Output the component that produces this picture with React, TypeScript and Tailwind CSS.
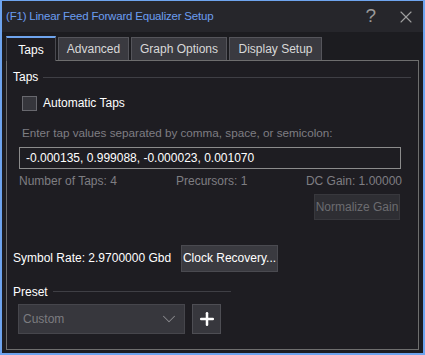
import React from 'react';
import { ChevronDown, Plus, X } from 'lucide-react';

const tabs = [
  { label: 'Taps', w: 'w-[50px]' },
  { label: 'Advanced', w: 'w-[71px]' },
  { label: 'Graph Options', w: 'w-[96px]' },
  { label: 'Display Setup', w: 'w-[93px]' },
];

const App: React.FC = () => {
  return (
    <div
      className="w-[425px] h-[355px] bg-[#1c1c20] border-2 border-t border-[#6ea4ee] flex flex-col text-[12px] text-[#e6e6e6]"
      style={{ fontFamily: '"Liberation Sans", Arial, sans-serif' }}
    >
      {/* title bar */}
      <div className="h-[31px] bg-[#26262b] flex items-center pl-[4px] pr-[7px] shrink-0">
        <span className="text-[#6b9df0] text-[11.5px] tracking-[-0.2px]">(F1) Linear Feed Forward Equalizer Setup</span>
        <span className="ml-auto text-[#9a9a9a] text-[19px] font-light mr-[20px]">?</span>
        <X size={20} strokeWidth={1.3} className="text-[#a0a0a0]" />
      </div>

      {/* tabs */}
      <div className="flex items-end gap-[2px] pl-[4px] pt-[4px] h-[28px] shrink-0">
        {tabs.map((t, i) => (
          <div
            key={t.label}
            className={
              i === 0
                ? `${t.w} h-[25px] flex items-center justify-center bg-[#1e1d22] border-t-2 border-x border-[#6ea4ee] border-x-[#4a4a50] text-white -mb-px z-10`
                : `${t.w} h-[23px] flex items-center justify-center bg-[#3a3a40] border border-b-0 border-[#55555b] text-[#d8d8d8]`
            }
          >
            {t.label}
          </div>
        ))}
      </div>

      {/* content panel */}
      <div className="flex-1 mx-[4px] mb-[3px] border border-[#6e6e6e] bg-[#1e1d22] flex flex-col px-[6px] pt-[7px]">
        <div className="flex items-center gap-[5px]">
          <span className="text-white">Taps</span>
          <div className="flex-1 h-px bg-[#3f3f45] mr-[1px]" />
        </div>

        <div className="flex items-center gap-[6px] mt-[8px] ml-[9px]">
          <div className="w-[15px] h-[15px] border border-[#68686e] bg-[#36363c]" />
          <span className="text-white">Automatic Taps</span>
        </div>

        <div className="mt-[12px] ml-[9px] text-[11.7px] text-[#7e7e82]">
          Enter tap values separated by comma, space, or semicolon:
        </div>

        <div className="mt-[5px] ml-[6px] mr-[11px] h-[22px] border border-[#8c8c8c] flex items-center px-[6px] text-white">
          -0.000135, 0.999088, -0.000023, 0.001070
        </div>

        <div className="flex items-center mt-[3px] ml-[6px] mr-[10px] text-[#7e7e82]">
          <span className="w-[157px]">Number of Taps: 4</span>
          <span>Precursors: 1</span>
          <span className="ml-auto">DC Gain: 1.00000</span>
        </div>

        <div className="flex justify-end mr-[12px] mt-[4px]">
          <div className="w-[86px] h-[26px] bg-[#2e2e33] border border-[#38383d] flex items-center justify-center text-[#6c6c70]">
            Normalize Gain
          </div>
        </div>

        <div className="flex items-center mt-[25px]">
          <span className="text-white w-[168px]">Symbol Rate: 2.9700000 Gbd</span>
          <div className="w-[97px] h-[27px] bg-[#3a3a40] border border-[#4a4a50] flex items-center justify-center text-white">
            Clock Recovery...
          </div>
        </div>

        <div className="flex items-center gap-[5px] mt-[11px] w-[218px]">
          <span className="text-white">Preset</span>
          <div className="flex-1 h-px bg-[#3f3f45]" />
        </div>

        <div className="flex items-center gap-[7px] mt-[3px] ml-[5px]">
          <div className="w-[167px] h-[30px] bg-[#37373d] border border-[#46464c] flex items-center px-[4px] text-[#7c7c80]">
            <span>Custom</span>
            <ChevronDown size={22} strokeWidth={1.1} className="ml-auto text-[#8a8a8e]" />
          </div>
          <div className="w-[29px] h-[30px] bg-[#37373d] border border-[#4e4e54] flex items-center justify-center">
            <Plus size={20} strokeWidth={3} className="text-white" />
          </div>
        </div>
      </div>
    </div>
  );
};

export default App;
